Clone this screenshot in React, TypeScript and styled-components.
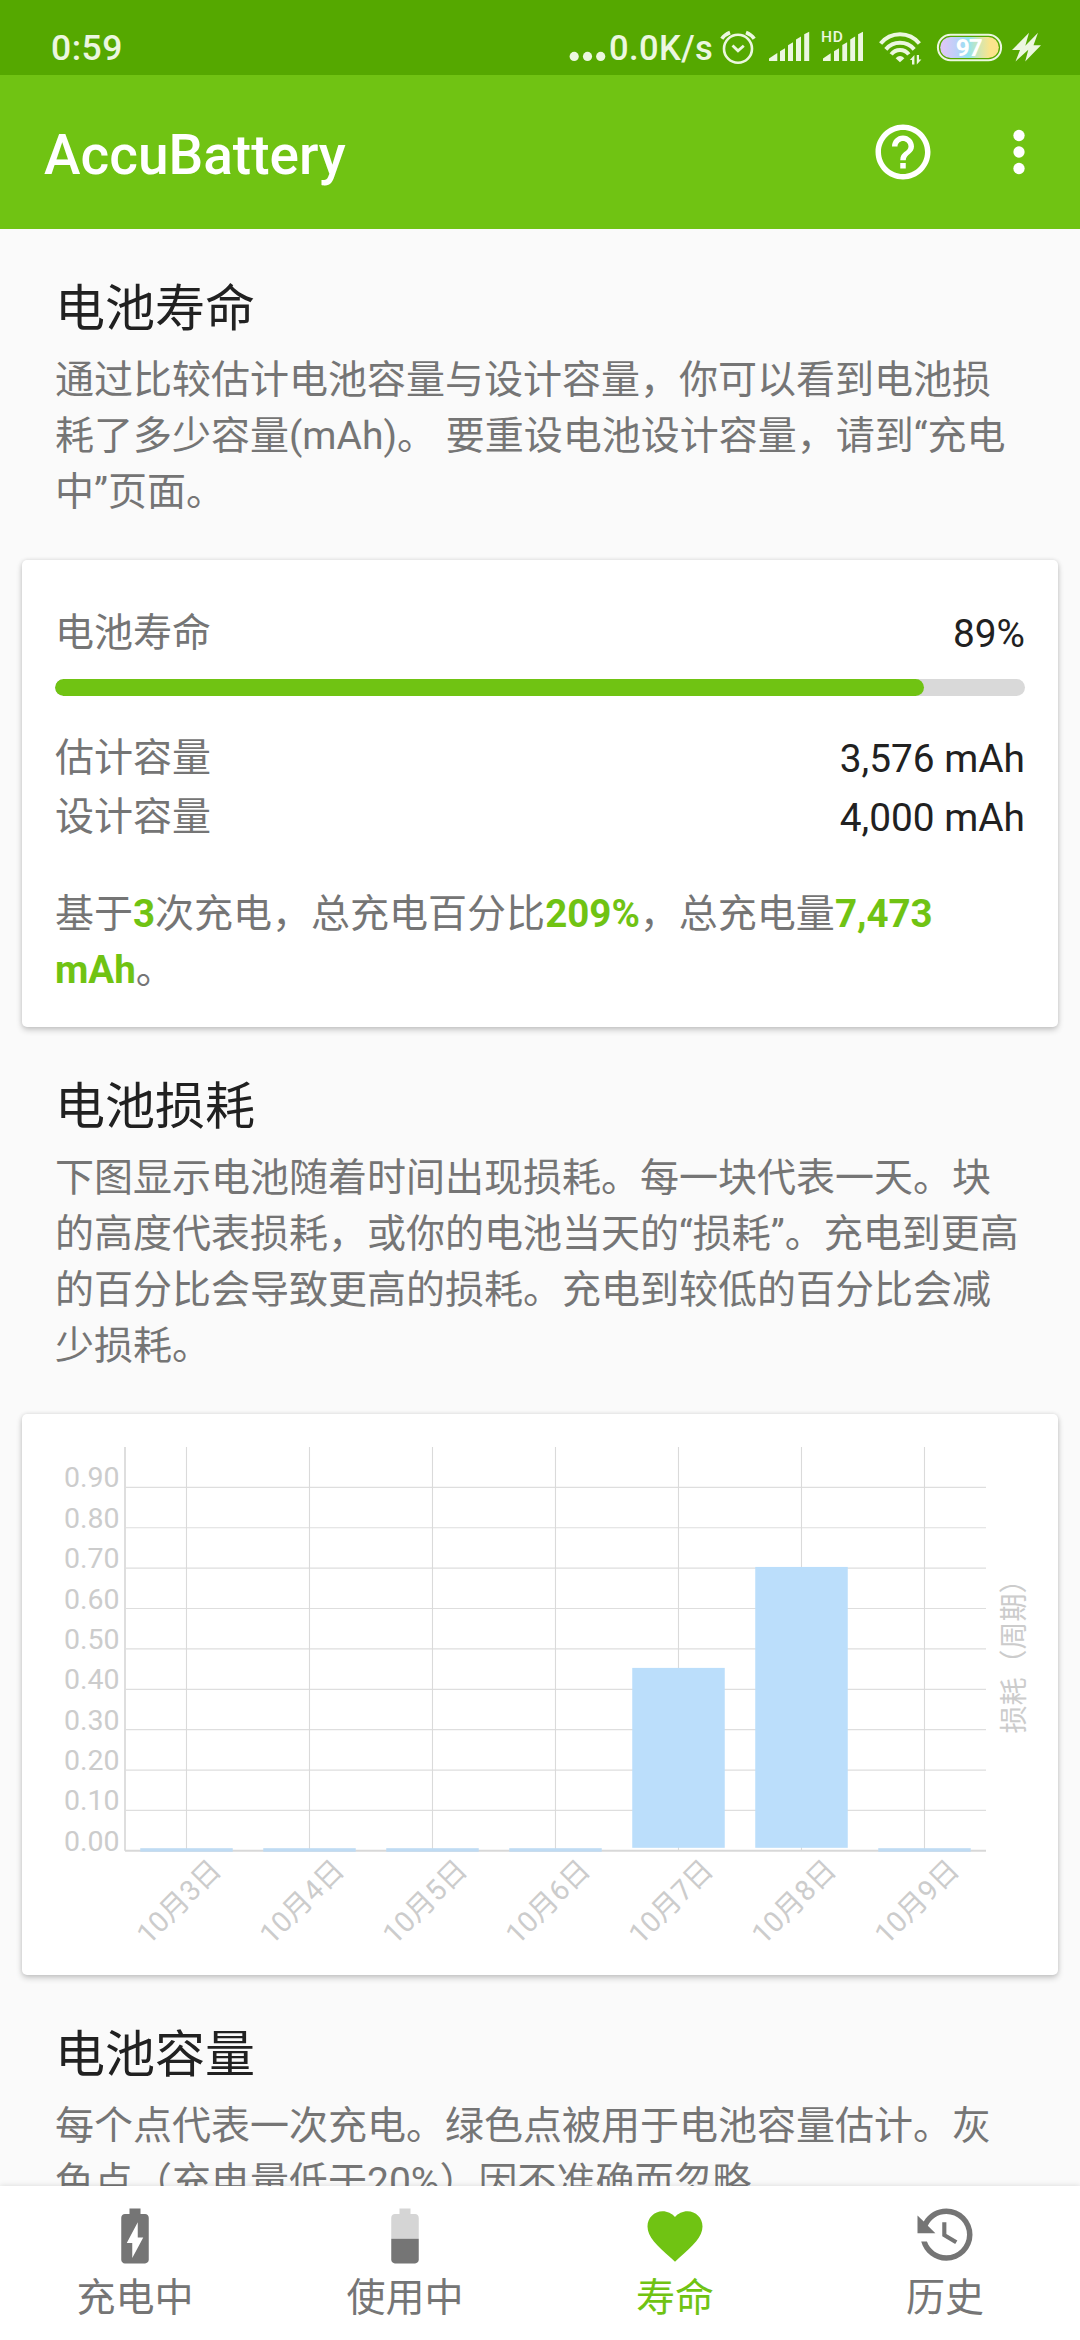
import React from "react";
import styled, { createGlobalStyle } from "styled-components";

const green = "#70c313";
const gray = "#757575";
const dark = "#212121";

const GlobalStyle = createGlobalStyle`
  html, body { margin: 0; padding: 0; background: #fafafa; }
  body {
    font-family: Roboto, "Noto Sans CJK SC", sans-serif;
    text-spacing-trim: space-all;
    overflow: hidden;
  }
  svg { display: block; flex: none; }
`;

const Screen = styled.div`
  width: 1080px;
  height: 2340px;
  display: flex;
  flex-direction: column;
  overflow: hidden;
  background: #fafafa;
`;

const StatusBar = styled.header`
  flex: none;
  box-sizing: border-box;
  height: 75px;
  padding: 21px 29px 0 51px;
  display: flex;
  justify-content: space-between;
  align-items: flex-start;
  background: #55a800;
  color: #ecf7e0;
`;

const StatusText = styled.span<{ $size: number; $spacing: number; $width: number }>`
  font-size: ${(p) => p.$size}px;
  line-height: 54px;
  font-weight: 500;
  width: ${(p) => p.$width}px;
  letter-spacing: ${(p) => p.$spacing}px;
  white-space: nowrap;
`;

const StatusIcons = styled.div`
  display: flex;
  align-items: flex-start;
`;

const AppBar = styled.div`
  flex: none;
  box-sizing: border-box;
  height: 154px;
  padding: 0 28px 0 44px;
  display: flex;
  align-items: center;
  background: ${green};
  color: #fff;
`;

const AppTitle = styled.h1`
  margin: 0;
  padding-top: 6px;
  flex: 1;
  font-size: 55px;
  line-height: 66px;
  font-weight: 500;
`;

const BarActions = styled.div`
  display: flex;
  gap: 50px;
`;

const Content = styled.main`
  flex: 1;
  min-height: 0;
  overflow: hidden;
`;

const SectionIntro = styled.section`
  padding: 43px 55px 40px;
`;

const SectionTitle = styled.h2`
  margin: 0 0 6px;
  font-size: 50px;
  line-height: 74px;
  font-weight: 400;
  color: ${dark};
`;

const Copy = styled.p`
  margin: 0;
  font-size: 39px;
  line-height: 56px;
  color: ${gray};
  white-space: pre;
`;

const Card = styled.section<{ $height: number }>`
  box-sizing: border-box;
  height: ${(p) => p.$height}px;
  margin: 0 22px;
  border-radius: 5px;
  background: #fff;
  box-shadow: 0 3px 6px rgba(0, 0, 0, 0.2), 0 0 4px rgba(0, 0, 0, 0.1);
`;

const HealthCard = styled(Card)`
  padding: 44px 33px 0;
`;

const StatRow = styled.div`
  display: flex;
  justify-content: space-between;
  height: 59px;
  font-size: 39px;
  line-height: 59px;
`;

const StatLabel = styled.span`
  color: ${gray};
`;

const StatValue = styled.span`
  color: ${dark};
  font-size: 38.8px;
`;

const Track = styled.div`
  height: 17px;
  margin: 16px 0 33px;
  border-radius: 9px;
  background: #d9d9d9;
  overflow: hidden;
`;

const Fill = styled.div`
  height: 100%;
  border-radius: 9px;
  background: ${green};
`;

const Summary = styled(Copy)`
  margin-top: 39px;
`;

const Strong = styled.strong`
  font-size: 38.5px;
  font-weight: 700;
  color: ${green};
`;

const NavBar = styled.nav`
  flex: none;
  height: 154px;
  display: grid;
  grid-template-columns: repeat(4, 1fr);
  background: #fff;
  box-shadow: 0 0 6px rgba(0, 0, 0, 0.14);
  z-index: 1;
`;

const NavItem = styled.div<{ $active?: boolean }>`
  display: flex;
  flex-direction: column;
  align-items: center;
  gap: 1px;
  padding-top: 17px;
  color: ${(p) => (p.$active ? green : gray)};
`;

const NavLabel = styled.span`
  font-size: 39px;
  line-height: 56px;
`;

const StatusGlyphs = () => (
  <svg width="335" height="54" viewBox="716 21 335 54" fill="currentColor" stroke="none">
    <g fill="none" stroke="currentColor" strokeWidth="2.6">
      <circle cx="738" cy="48.8" r="14" />
      <path d="M732.5 45.5L738 50.8L743.8 45.8" strokeWidth="2.8" />
      <path d="M721.8 38.8Q724.6 34.6 730 32.5M754.2 38.8Q751.4 34.6 746 32.5" strokeWidth="3.6" />
    </g>
    <path d="M769 61V58.6L777.3 53V61Z" />
    <path d="M780 61V51.2L785 48.2V61Z" />
    <path d="M788 61V45.2L793 42.2V61Z" />
    <path d="M796 61V39.5L801 36.5V61Z" />
    <path d="M804.2 61V34.2L809.2 31.8V61Z" />
    <path d="M823 61V58.6L830.7 53.2V61Z" />
    <path d="M834 61V51.2L839 48.2V61Z" />
    <path d="M842.3 61V45L847.1 42.3V61Z" />
    <path d="M850.2 61V39.5L855.1 36.5V61Z" />
    <path d="M858.1 61V34.2L863 31.8V61Z" />
    <text x="821" y="42" fontSize="15.5" fontWeight="500" letterSpacing=".7">HD</text>
    <g fill="none" stroke="currentColor" strokeWidth="4">
      <path d="M880.6 43.6A24.8 24.8 0 0 1 919.4 43.6" />
      <path d="M885.8 49.4A18.7 18.7 0 0 1 914.2 49.4" />
      <path d="M891.2 54.4A11 11 0 0 1 908.8 54.4" />
    </g>
    <path d="M900 62.3L895.6 58.3Q900 53.6 904.4 58.3Z" />
    <path d="M914.4 64.5V55L909.8 60H912V64.5ZM916.8 55V64.5L921.4 59.5H919V55Z" />
    <defs>
      <linearGradient id="charge" x1="0" x2="1">
        <stop offset=".05" stopColor="#dcc8f8" />
        <stop offset=".28" stopColor="#bcd0f8" />
        <stop offset=".48" stopColor="#94e4f0" />
        <stop offset=".66" stopColor="#d0e6b4" />
        <stop offset=".85" stopColor="#fbe48c" />
      </linearGradient>
    </defs>
    <rect x="937.9" y="34.8" width="63.2" height="25.4" rx="12.7" fill="none" stroke="currentColor" strokeWidth="2" />
    <rect x="940.2" y="37" width="58.6" height="21" rx="10.5" fill="url(#charge)" />
    <text x="968.8" y="56" fontSize="24.5" fontWeight="700" letterSpacing="-1" fill="#fff" textAnchor="middle">97</text>
    <path d="M1029 32.7L1012 50H1020L1015.5 61.5L1028.3 49.8L1025.2 61.5L1041 45.3H1033.5L1038 32.7L1025.3 45.8Z" />
  </svg>
);

const Dots = () => (
  <svg width="40" height="54" viewBox="569 21 40 54" fill="currentColor">
    <circle cx="574.2" cy="56.4" r="4.6" />
    <circle cx="587.5" cy="56.4" r="4.6" />
    <circle cx="600.7" cy="56.4" r="4.6" />
  </svg>
);

const Icon = ({ children }: { children: React.ReactNode }) => (
  <svg width="66" height="66" viewBox="0 0 24 24" fill="currentColor">
    {children}
  </svg>
);

const HelpIcon = () => (
  <Icon>
    <path d="M11 18h2v-2h-2v2zm1-16C6.48 2 2 6.48 2 12s4.48 10 10 10 10-4.48 10-10S17.52 2 12 2zm0 18c-4.41 0-8-3.59-8-8s3.59-8 8-8 8 3.59 8 8-3.59 8-8 8zm0-14c-2.21 0-4 1.79-4 4h2c0-1.1.9-2 2-2s2 .9 2 2c0 2-3 1.75-3 5h2c0-2.25 3-2.5 3-5 0-2.21-1.79-4-4-4z" />
  </Icon>
);

const MoreIcon = () => (
  <Icon>
    <circle cx="12" cy="6" r="2.05" />
    <circle cx="12" cy="12" r="2.05" />
    <circle cx="12" cy="18" r="2.05" />
  </Icon>
);

const ChargingIcon = () => (
  <Icon>
    <path d="M15.67 4H14V2h-4v2H8.33C7.6 4 7 4.6 7 5.33v15.33C7 21.4 7.6 22 8.33 22h7.33c.74 0 1.34-.6 1.34-1.33V5.33C17 4.6 16.4 4 15.67 4zM11 20v-5.5H9L13 7v5.5h2L11 20z" />
  </Icon>
);

const HalfBatteryIcon = () => (
  <Icon>
    <path fillOpacity=".3" d="M17 5.33C17 4.6 16.4 4 15.67 4H14V2h-4v2H8.33C7.6 4 7 4.6 7 5.33V13h10V5.33z" />
    <path d="M7 13v7.67C7 21.4 7.6 22 8.33 22h7.33c.74 0 1.34-.6 1.34-1.33V13H7z" />
  </Icon>
);

const HeartIcon = () => (
  <Icon>
    <path d="M12 21.35l-1.45-1.32C5.4 15.36 2 12.28 2 8.5 2 5.42 4.42 3 7.5 3c1.74 0 3.41.81 4.5 2.09C13.09 3.81 14.76 3 16.5 3 19.58 3 22 5.42 22 8.5c0 3.78-3.4 6.86-8.55 11.54L12 21.35z" />
  </Icon>
);

const HistoryIcon = () => (
  <Icon>
    <path d="M11,7V12.11L15.71,14.9L16.5,13.62L12.5,11.25V7M12.5,2C8.97,2 5.91,3.92 4.27,6.77L2,4.5V11H8.5L5.75,8.25C6.96,5.73 9.5,4 12.5,4A7.5,7.5 0 0,1 20,11.5A7.5,7.5 0 0,1 12.5,19C9.23,19 6.47,16.91 5.44,14H3.34C4.44,18.03 8.11,21 12.5,21A9.5,9.5 0 0,0 22,11.5A9.5,9.5 0 0,0 12.5,2Z" />
  </Icon>
);

const wear = [
  { day: "10月3日", value: 0 },
  { day: "10月4日", value: 0 },
  { day: "10月5日", value: 0 },
  { day: "10月6日", value: 0 },
  { day: "10月7日", value: 0.45 },
  { day: "10月8日", value: 0.7 },
  { day: "10月9日", value: 0 },
];

const ChartSvg = styled.svg`
  font-size: 28.5px;
`;

// Plot area in card coordinates.
const plot = { left: 103, right: 964, top: 33, bottom: 436.8 };
const stepX = (plot.right - plot.left) / wear.length;
const stepY = (plot.bottom - plot.top) / 10;

const WearChart = () => (
  <ChartSvg width="1036" height="561" viewBox="0 0 1036 561">
    {Array.from({ length: 9 }, (_, i) => {
      const y = plot.bottom - (i + 1) * stepY;
      return <line key={i} x1={plot.left} x2={plot.right} y1={y} y2={y} stroke="#dedede" strokeWidth="1.2" />;
    })}
    {wear.map((d, i) => {
      const x = plot.left + (i + 0.5) * stepX;
      return <line key={d.day} x1={x} x2={x} y1={plot.top} y2={plot.bottom} stroke="#dadada" strokeWidth="1.1" />;
    })}
    <line x1={plot.left} x2={plot.left} y1={plot.top} y2={plot.bottom} stroke="#dedede" strokeWidth="2" />
    <line x1={plot.left} x2={plot.right} y1={plot.bottom} y2={plot.bottom} stroke="#d8d8d8" strokeWidth="2" />
    {wear.map((d, i) => {
      const x = plot.left + (i + 0.5) * stepX - 46.25;
      const top = plot.bottom - d.value * stepY * 10 - 1.2;
      return d.value > 0 ? (
        <rect key={d.day} x={x} y={top} width="92.5" height={433.8 - top} fill="#bbdefb" />
      ) : (
        <rect key={d.day} x={x} y="434.2" width="92.5" height="3.5" fill="#bfdbf3" />
      );
    })}
    <g fill="#ccc">
      {Array.from({ length: 10 }, (_, i) => (
        <text key={i} x="97.5" y={plot.bottom - i * stepY} textAnchor="end">
          {(i / 10).toFixed(2)}
        </text>
      ))}
      {wear.map((d, i) => (
        <text key={d.day} textAnchor="end" transform={`translate(${plot.left + (i + 0.5) * stepX + 36.5} 457.5) rotate(-45)`}>
          {d.day}
        </text>
      ))}
      <text fontSize="28" textAnchor="middle" transform="translate(1001.5 235.5) rotate(-90)">损耗（周期）</text>
    </g>
  </ChartSvg>
);

const healthCopy = [
  "通过比较估计电池容量与设计容量，你可以看到电池损",
  "耗了多少容量(mAh)。 要重设电池设计容量，请到“充电",
  "中”页面。",
].join("\n");

const wearCopy = [
  "下图显示电池随着时间出现损耗。每一块代表一天。块",
  "的高度代表损耗，或你的电池当天的“损耗”。充电到更高",
  "的百分比会导致更高的损耗。充电到较低的百分比会减",
  "少损耗。",
].join("\n");

const capacityCopy = [
  "每个点代表一次充电。绿色点被用于电池容量估计。灰",
  "色点（充电量低于20%）因不准确而忽略。",
].join("\n");

export default function App() {
  return (
    <Screen lang="zh-CN">
      <GlobalStyle />
      <StatusBar>
        <StatusText $size={35.5} $spacing={0.5} $width={90}>0:59</StatusText>
        <StatusIcons>
          <Dots />
          <StatusText $size={34.5} $spacing={0.4} $width={107}>0.0K/s</StatusText>
          <StatusGlyphs />
        </StatusIcons>
      </StatusBar>
      <AppBar>
        <AppTitle>AccuBattery</AppTitle>
        <BarActions>
          <HelpIcon />
          <MoreIcon />
        </BarActions>
      </AppBar>
      <Content>
        <SectionIntro>
          <SectionTitle>电池寿命</SectionTitle>
          <Copy>{healthCopy}</Copy>
        </SectionIntro>
        <HealthCard $height={467}>
          <StatRow>
            <StatLabel>电池寿命</StatLabel>
            <StatValue>89%</StatValue>
          </StatRow>
          <Track>
            <Fill style={{ width: `${(869 / 970) * 100}%` }} />
          </Track>
          <StatRow>
            <StatLabel>估计容量</StatLabel>
            <StatValue>3,576 mAh</StatValue>
          </StatRow>
          <StatRow>
            <StatLabel>设计容量</StatLabel>
            <StatValue>4,000 mAh</StatValue>
          </StatRow>
          <Summary>
            基于<Strong>3</Strong>次充电，总充电百分比<Strong>209%</Strong>，总充电量<Strong>7,473{"\n"}mAh</Strong>。
          </Summary>
        </HealthCard>
        <SectionIntro>
          <SectionTitle>电池损耗</SectionTitle>
          <Copy>{wearCopy}</Copy>
        </SectionIntro>
        <Card $height={561}>
          <WearChart />
        </Card>
        <SectionIntro>
          <SectionTitle>电池容量</SectionTitle>
          <Copy>{capacityCopy}</Copy>
        </SectionIntro>
      </Content>
      <NavBar>
        <NavItem>
          <ChargingIcon />
          <NavLabel>充电中</NavLabel>
        </NavItem>
        <NavItem>
          <HalfBatteryIcon />
          <NavLabel>使用中</NavLabel>
        </NavItem>
        <NavItem $active>
          <HeartIcon />
          <NavLabel>寿命</NavLabel>
        </NavItem>
        <NavItem>
          <HistoryIcon />
          <NavLabel>历史</NavLabel>
        </NavItem>
      </NavBar>
    </Screen>
  );
}
